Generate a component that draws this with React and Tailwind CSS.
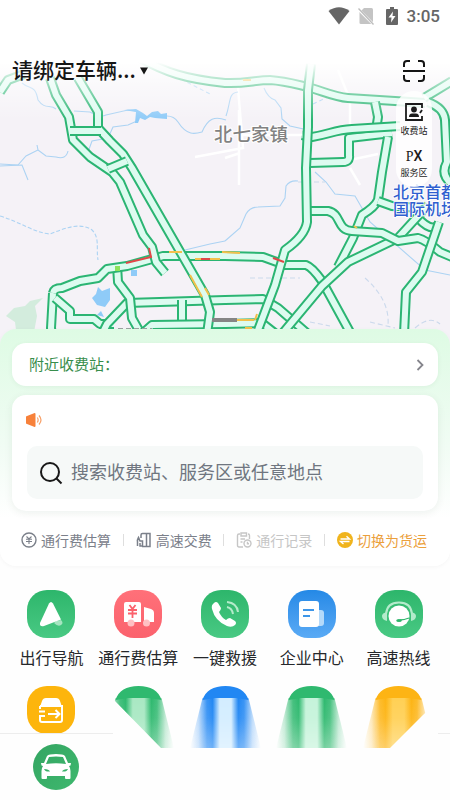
import React from 'react';

// Every road is drawn twice: a green casing, then a pale core on top of it
const roads = [
    'M0 92 L8 80 L24 74',
    'M140 58 C165 72 185 79 225 83 C245 84 255 80 270 80 C285 81 295 84 308 87 C325 92 335 97 348 98 L395 101 L425 103',
    'M424 98 L452 81',
    'M428 102 Q444 108 445 120 L447 162 Q440 175 452 184',
    'M375 102 L378 117 L376 130',
    'M310 163 L343 162 Q350 162 349 155 L349 138 L392 133',
    'M302 135 L312 137 C330 134 335 130 352 129 L400 126',
    'M388 137 L382 172 L378 200 Q375 207 362 215 L353 238 L338 267',
    'M378 201 L392 206 L420 208',
    'M418 218 Q430 231 437 226',
    'M53 340 L51 328 L53 293',
    'M55 298 L70 311 L70 319 L94 319 L100 324 L114 324',
    'M100 338 L107 324 L127 303 L225 300 L263 299 L278 308 L308 334',
    'M117 265 L118 282 L130 298 L132 318 L141 334',
    'M182 300 L182 334',
    'M143 333 L152 325 L225 324 L262 323 L276 334',
    'M53 293 Q54 288 62 288 L80 281 L98 278 L107 269 L127 266 L163 256 L225 256 L263 257 L285 265 L306 265 Q312 267 322 281 L351 334',
    'M282 334 L322 286 L348 262 L398 238 L419 215 L428 205',
    'M307 211 L328 211 C342 214 336 230 352 231 L382 233 L398 241 L418 238 Q426 240 440 252 L452 257',
    'M311 64 L308 90 L308 127 L306 168 L307 222 Q305 236 285 250 L275 285 L258 330',
    'M439 222 L422 272 L406 292 L404 334',
    'M50 78 L56 95 L69 117 L73 140 L90 157 L112 172 L120 182 L143 235 L152 247 L156 262 L165 273',
    'M78 78 L98 112 L98 128 L110 141 L123 154 L132 168 L205 295 L210 312 L207 334',
    'M70 131 L101 131',
    'M108 169 L127 161',
];

const rivers = [
    'M22 83 C30 90 35 84 38 100 C45 110 50 104 56 109',
    'M74 111 L90 112 Q100 118 106 115 L128 110 L138 111 M167 116 Q174 116 178 122 C187 136 195 134 202 132 C208 118 215 116 226 120',
    'M137 121 L128 125 L113 127 L108 138 L92 141 L88 152',
    'M0 164 L18 165 L26 156 L38 150 L37 145 M38 150 L46 156 L56 157 Q66 160 68 151',
    'M226 116 C231 102 228 93 238 92 M264 88 Q268 98 275 100 L281 108 L282 119 L290 126 L308 130',
    'M0 166 L22 165 L28 180',
    'M225 241 L240 228 L246 214 Q250 207 258 207 L280 206 L285 198 L286 186 Q290 180 298 181',
    'M315 172 L326 182 L335 194 L355 196 L370 222 L425 270 L450 275',
];

function Road({ d }) {
    return (
        <>
            <path d={d} stroke="#2bb573" strokeWidth="10" />
            <path d={d} stroke="#ddfbf0" strokeWidth="6" />
        </>
    );
}

function TrafficMap() {
    return (
        <svg
            viewBox="0 0 450 345"
            preserveAspectRatio="xMidYMin slice"
            className="absolute inset-0 h-full w-full"
            role="img"
            aria-label="路况地图"
        >
            <defs>
                <linearGradient id="mapFade" x1="0" y1="0" x2="0" y2="1">
                    <stop offset="0" stopColor="#fff" />
                    <stop offset="0.52" stopColor="#fff" />
                    <stop offset="0.72" stopColor="#fff" stopOpacity="0.5" />
                    <stop offset="1" stopColor="#fff" stopOpacity="0" />
                </linearGradient>
            </defs>
            <rect width="450" height="345" fill="#f5f2f7" />
            <path d="M6 316 L14 308 L25 306 L30 301 L43 298 L35 306 L37 316 L34 332 L16 330 L15 322 Z" fill="#d3ecdd" />

            <g fill="none" stroke="#fff" strokeWidth="2.500">
                <path d="M195 157 L243 148 L238 88 M239 185 L239 110 M225 158 L240 153 M243 135 L305 135" />
                <path d="M338 70 L350 100 L350 125 M350 160 L378 154 M350 168 L360 185" />
            </g>
            <g fill="none" stroke="#acd3f3" strokeWidth="1.100">
                {rivers.map((d) => (
                    <path key={d} d={d} />
                ))}
                <path d="M0 216 C20 222 35 233 50 234 C65 228 80 222 92 230 C100 238 96 248 98 260" strokeDasharray="4 2" />
                <path d="M185 250 L210 244 L225 241" />
                <path d="M298 182 L325 182 M250 278 L300 278 M365 278 Q390 300 388 325 M310 322 L330 326 M370 322 L395 328 M415 328 Q430 315 440 324" stroke="#cbd9ec" strokeDasharray="5 3" />
                <path d="M175 76 L210 94 M313 104 L328 97 L340 98" strokeDasharray="4 3" />
            </g>
            <g fill="#8fcbf8">
                <path d="M124 110 L136 109 L143 113 L147 116 L152 112 L158 111 L161 114 L167 113 L167 119 L155 118 L150 117 L145 120 L140 118 L138 123 L135 123 L136 112 Z" />
                <path d="M98 287 L102 291 L110 288 L110 300 L105 307 L97 305 L92 298 L96 294 Z M97 315 L101 311 L104 317 Z M131 270 h6 v6 h-6 Z" />
            </g>

            <g fill="none" strokeLinejoin="round">
                {roads.map((d) => (
                    <Road key={d} d={d} />
                ))}
            </g>

            {/* Slow and congested stretches */}
            <g fill="none" strokeWidth="2">
                <path d="M126 263 L151 257 L149 248 M201 259 L210 259 M273 258 L284 262" stroke="#e04848" />
                <path d="M169 252 L182 252 M195 259 L201 259 M210 259 L220 259 M222 252 L240 253 M190 275 L202 297 M205 288 L209 295 M234 320 L254 320 M257 314 L255 320 M245 328 L252 328 M354 226 L357 228 M243 80 L251 80" stroke="#f3c04c" />
                <path d="M212 320 L237 320" stroke="#858585" strokeWidth="4" />
                <path d="M118 329 L152 329" stroke="#9aa3a0" strokeDasharray="5 3" />
            </g>
            <path d="M115 266 h5 v5 h-5 Z" fill="#8be25c" />

            <text x="214" y="141" fontSize="18.5" fontWeight="500" fill="#828282" stroke="#fff" strokeWidth="2" paintOrder="stroke">北七家镇</text>
            <g fontSize="16" fontWeight="500" fill="#2f5fd0" stroke="#fff" strokeWidth="1.500" paintOrder="stroke">
                <text x="393" y="198">北京首都</text>
                <text x="393" y="215">国际机场</text>
            </g>
            <rect width="450" height="120" fill="url(#mapFade)" />
        </svg>
    );
}

function StatusBar() {
    return (
        <div className="flex h-8 items-center justify-end pr-[10px] text-[#666666]">
            <svg viewBox="0 0 22 18" className="mr-2 h-[18px] w-[22px]" fill="currentColor">
                <path d="M0.500 4 Q11 -3.500 21.500 4 L11 17.500 Z" />
            </svg>
            <svg viewBox="0 0 17 18" className="mr-[11px] h-[18px] w-[17px]">
                <path d="M6 1 H13.500 Q15 1 15 2.500 V16 Q15 17 13.500 17 H3 Q1.500 17 1.500 16 V5.500 Z" fill="#c4c4c4" />
                <path d="M0 2 L16 18" stroke="#fff" strokeWidth="2.500" />
                <path d="M0.500 1.500 L15.500 17.500" stroke="#bdbdbd" strokeWidth="1.300" />
            </svg>
            <svg viewBox="0 0 12 18" className="mr-[9px] h-[18px] w-3" fill="currentColor">
                <path fillRule="evenodd" d="M4 0 H8 V2 H11 Q12 2 12 3 V17 Q12 18 11 18 H1 Q0 18 0 17 V3 Q0 2 1 2 H4 Z M7 4.500 L2.500 10.500 H5.500 L5 15.500 L9.500 9 H6.500 Z" />
            </svg>
            <span className="font-[Roboto] text-[17px] leading-5 font-medium">3:05</span>
        </div>
    );
}

function MapTools() {
    return (
        <div className="flex h-[96px] w-9 flex-col items-center rounded-[18px] bg-white/85 pt-3">
            <button className="flex flex-col items-center text-[#1b1b1b]">
                <svg viewBox="0 0 18 18" className="h-[18px] w-[18px]" fill="none" stroke="currentColor" strokeWidth="1.800">
                    <path d="M17 5 V1 H1 V17 H17 V13" />
                    <path d="M17 7 L15 10" />
                    <circle cx="9" cy="6.500" r="2.900" fill="currentColor" stroke="none" />
                    <path d="M4 14 Q4 10.500 7 10.500 H11 Q14 10.500 14 14 Z" fill="currentColor" stroke="none" />
                </svg>
                <span className="mt-1 text-[9px] leading-3 whitespace-nowrap">收费站</span>
            </button>
            <button className="mt-2 flex flex-col items-center text-[#1b1b1b]">
                <span className="text-[14px] leading-5">
                    <span className="font-['Liberation_Serif']">P</span>
                    <span className="font-[Roboto] font-medium">X</span>
                </span>
                <span className="text-[9px] leading-3 whitespace-nowrap">服务区</span>
            </button>
        </div>
    );
}

function MapHeader() {
    return (
        <header className="relative h-[345px] overflow-hidden">
            <TrafficMap />
            <div className="relative">
                <StatusBar />
                <div className="mt-[23px] flex items-start justify-between pr-[18px] pl-3">
                    <button className="flex h-8 items-center text-[21px] leading-7 font-medium text-[#161616]">
                        <span className="mb-1">请绑定车辆...</span>
                        <svg viewBox="0 0 8 8" className="ml-1 h-2 w-2" fill="currentColor">
                            <path d="M0 0.500 H8 L4 7.500 Z" />
                        </svg>
                    </button>
                    <div className="flex w-9 flex-col items-center gap-1">
                        <button aria-label="扫一扫" className="flex h-8 items-center">
                            <svg viewBox="0 0 24 24" className="h-6 w-6" fill="none" stroke="#151515" strokeWidth="2">
                                <path d="M2 8 V5 Q2 2 5 2 H8 M16 2 H19 Q22 2 22 5 V8 M22 16 V19 Q22 22 19 22 H16 M8 22 H5 Q2 22 2 19 V16 M1 12 H23" />
                            </svg>
                        </button>
                        <MapTools />
                    </div>
                </div>
            </div>
        </header>
    );
}

const YuanIcon = () => (
    <svg viewBox="0 0 16 16" className="h-4 w-4" fill="none" stroke="currentColor" strokeWidth="1.400">
        <circle cx="8" cy="8" r="7" />
        <path d="M5.500 4.500 L8 7 L10.500 4.500 M5 7.300 H11 M5 9.500 H11 M8 7 V12" strokeWidth="1.100" />
    </svg>
);

const GateIcon = () => (
    <svg viewBox="0 0 16 16" className="h-4 w-4" fill="none" stroke="currentColor" strokeWidth="1.500">
        <path d="M5 6 V3 Q5 1.500 6.500 1.500 H14 V14.500 H6 M10.500 2 V14" />
        <path d="M1.500 14 V10 Q1 8 2.500 5.500 L4 9 H6.500 V14 H4 V11" />
    </svg>
);

const RecordIcon = () => (
    <svg viewBox="0 0 16 16" className="h-4 w-4" fill="none" stroke="currentColor" strokeWidth="1.400">
        <path d="M7 15 H3 Q1.500 15 1.500 13.500 V3.500 Q1.500 2 3 2 H4 M12 2 Q13.500 2 13.500 3.500 V7 M5 1 H10.500 V4 H5 Z M4.500 7 H9 M4.500 10 H6.500" />
        <circle cx="11.500" cy="11.500" r="3.500" />
        <path d="M11.500 9.800 V11.700 H13" />
    </svg>
);

const SwitchIcon = () => (
    <svg viewBox="0 0 16 16" className="h-4 w-4">
        <circle cx="8" cy="8" r="8" fill="#f0b41c" />
        <path d="M3.500 7 H12.500 L9.500 4.300 M12.500 9.500 H3.500 L6.500 12" fill="none" stroke="#fff" strokeWidth="1.400" />
    </svg>
);

const shortcuts = [
    { label: '通行费估算', icon: <YuanIcon />, color: 'text-[#7b808a]' },
    { label: '高速交费', icon: <GateIcon />, color: 'text-[#7b808a]' },
    { label: '通行记录', icon: <RecordIcon />, color: 'text-[#c6c6c6]' },
    { label: '切换为货运', icon: <SwitchIcon />, color: 'text-[#eba03c]' },
];

function SearchPanel() {
    return (
        <section className="relative -mt-4 rounded-2xl bg-linear-to-b from-[#defbe4] via-[#f1fcf4] via-50% to-white to-80% px-3 pt-[14px] shadow-[0_1px_4px_rgba(0,0,0,0.04)]">
            <button className="flex h-[43px] w-full items-center justify-between rounded-[14px] bg-white pr-3 pl-[17px] text-[15px] text-[#388e4c] shadow-[0_1px_5px_rgba(0,80,30,0.06)]">
                附近收费站：
                <svg viewBox="0 0 12 12" className="h-3 w-3" fill="none" stroke="#85858c" strokeWidth="1.800">
                    <path d="M3.500 1 L8.500 6 L3.500 11" />
                </svg>
            </button>

            <div className="mt-[9px] rounded-[14px] bg-white px-[15px] pt-[17px] pb-3 shadow-[0_2px_8px_rgba(0,60,30,0.07)]">
                <svg viewBox="0 0 16 16" className="-ml-px h-4 w-4" aria-label="公告">
                    <path d="M0 5 Q0 4 1 4 L8 1.200 Q9.500 0.800 9.500 2 V14 Q9.500 15.200 8 14.800 L1 12 Q0 12 0 11 Z" fill="#f7813a" />
                    <path d="M11.300 5.500 Q13 8 11.300 10.500 M13 3.500 Q17 8 13 12.500" fill="none" stroke="#f7a068" strokeWidth="1.200" />
                </svg>
                <label className="mt-[18px] flex h-[53px] items-center rounded-[10px] bg-[#f6f9f8] pl-3">
                    <svg viewBox="0 0 24 24" className="h-6 w-6 shrink-0" fill="none" stroke="#181818" strokeWidth="2">
                        <circle cx="11" cy="11" r="9" />
                        <path d="M17.500 17.500 L22.500 22.500" />
                    </svg>
                    <input
                        type="text"
                        aria-label="搜索"
                        placeholder="搜索收费站、服务区或任意地点"
                        className="ml-2 w-full min-w-0 bg-transparent pb-[2px] text-[18px] text-[#444] outline-none placeholder:text-[#6f7680]"
                    />
                </label>
            </div>

            <div className="flex h-[55px] items-center justify-between pt-[2px] pr-[11px] pl-[9px]">
                {shortcuts.map((item, i) => (
                    <React.Fragment key={item.label}>
                        {i > 0 && <span className="h-3 w-px bg-[#dedede]" />}
                        <button className={`flex items-center gap-1 text-[14px] leading-5 whitespace-nowrap ${item.color}`}>
                            {item.icon}
                            {item.label}
                        </button>
                    </React.Fragment>
                ))}
            </div>
        </section>
    );
}

const services = [
    {
        label: '出行导航',
        bg: 'from-[#2db66b] to-[#48c983]',
        art: (
            <>
                <path d="M29 31 L34 30 Q37 33 34 35 Q31 37 27 33 Z" fill="#a5e4c0" />
                <path d="M22 13.500 Q24 10.500 26 13.500 L34 29.500 L17 36 Q12.500 37 13 33 Z" fill="#fff" />
            </>
        ),
    },
    {
        label: '通行费估算',
        bg: 'from-[#ff7079] to-[#fb626d]',
        art: (
            <>
                <path d="M12 12 H25 Q27 12 27 14 V32 H10 V14 Q10 12 12 12 Z M30 17 L37 19 Q40 20 40 23 V32 H30 Z" fill="#fff" />
                <path d="M15.500 15 L18.500 19 L21.500 15 M14 20 H23 M14 23.500 H23 M18.500 19 V28" fill="none" stroke="#fb626d" strokeWidth="1.800" />
                <circle cx="17" cy="33" r="3.500" fill="#ffc0c3" />
                <circle cx="32.500" cy="33" r="3.500" fill="#ffc0c3" />
            </>
        ),
    },
    {
        label: '一键救援',
        bg: 'from-[#2db66b] to-[#48c983]',
        art: (
            <>
                <path d="M13 13 Q15 11 17 13 L20 18 Q20 20 18 22 Q20 27 25 30 Q27 28 29 28 L34 31 Q36 33 34 35 Q31 38 26 36 Q14 31 11 19 Q10 15 13 13 Z" fill="#fff" />
                <path d="M26 17 Q31 18 32 24 M26 12 Q36 13 37 22" fill="none" stroke="#b4ebcb" strokeWidth="2" />
            </>
        ),
    },
    {
        label: '企业中心',
        bg: 'from-[#2489e6] to-[#59aaf5]',
        art: (
            <>
                <path d="M28 20 H33 Q36 20 36 23 V33 Q36 36 33 36 H28 Z" fill="#b5dafa" />
                <rect x="11" y="11" width="20" height="26" rx="3" fill="#fff" />
                <path d="M15 20 H26 M15 26 H22" stroke="#3d96e8" strokeWidth="2" />
            </>
        ),
    },
    {
        label: '高速热线',
        bg: 'from-[#2db66b] to-[#48c983]',
        art: (
            <>
                <path d="M11 24 Q12 12.500 24 12.500 Q36 12.500 37 24" fill="none" stroke="#b4ebcb" strokeWidth="2" />
                <path d="M12 22 V31 Q7 30 7 26 Q7 23 12 22 Z M36 22 V31 Q41 30 41 26 Q41 23 36 22 Z" fill="#b4ebcb" />
                <circle cx="24" cy="26" r="10.500" fill="#fff" />
                <path d="M34 28 Q29 30 25 30" fill="none" stroke="#2db66b" strokeWidth="1.300" />
                <ellipse cx="24" cy="30.500" rx="2.800" ry="1.600" fill="#2db66b" />
            </>
        ),
    },
];

// Tiles that trail off into a beam of light towards the tab bar
const beams = [
    { id: 'green', color: '#2fb96f', core: '#a9e8c3', clip: 'M0 0 H87 V62 H66 L20 15 Z' },
    { id: 'blue', color: '#2187f3', core: '#d3edff', clip: 'M0 0 H87 V62 H0 Z' },
    { id: 'mint', color: '#2fb96f', core: '#c5f3da', clip: 'M0 0 H87 V62 H0 Z' },
    { id: 'amber', color: '#fdb414', core: '#ffd055', clip: 'M0 0 H87 V12 L68 29 L35 62 H0 Z' },
];

function Beam({ id, color, core, clip }) {
    return (
        <svg viewBox="0 0 87 62" className="h-[62px] w-[87px]">
            <defs>
                <clipPath id={`clip-${id}`}>
                    <path d={clip} />
                </clipPath>
                <linearGradient id={`side-${id}`} gradientUnits="userSpaceOnUse" x1="8" y1="0" x2="79" y2="0">
                    <stop offset="0" stopColor={color} stopOpacity="0" />
                    <stop offset="0.12" stopColor={color} stopOpacity="0.3" />
                    <stop offset="0.24" stopColor={color} stopOpacity="0.9" />
                    <stop offset="0.32" stopColor={color} />
                    <stop offset="0.42" stopColor={core} />
                    <stop offset="0.58" stopColor={core} />
                    <stop offset="0.68" stopColor={color} />
                    <stop offset="0.76" stopColor={color} stopOpacity="0.9" />
                    <stop offset="0.88" stopColor={color} stopOpacity="0.3" />
                    <stop offset="1" stopColor={color} stopOpacity="0" />
                </linearGradient>
                <linearGradient id={`fall-${id}`} x1="0" y1="0" x2="0" y2="1">
                    <stop offset="0" stopColor="#fff" />
                    <stop offset="0.4" stopColor="#eee" />
                    <stop offset="1" stopColor="#a8a8a8" />
                </linearGradient>
                <mask id={`mask-${id}`}>
                    <path d="M20.500 12 H66.500 L79 62 H8 Z" fill={`url(#fall-${id})`} />
                </mask>
            </defs>
            <g clipPath={`url(#clip-${id})`}>
                <rect x="8" y="12" width="71" height="50" fill={`url(#side-${id})`} mask={`url(#mask-${id})`} />
                <path d="M20.500 14 Q25 0 43.500 0 Q62 0 66.500 14 L54 12 H33 Z" fill={color} />
            </g>
        </svg>
    );
}

function Services() {
    return (
        <section className="px-2 pt-6">
            <div className="grid grid-cols-5">
                {services.map((item) => (
                    <a key={item.label} href="#" className="flex flex-col items-center text-[#26282b]">
                        <span className={`h-12 w-12 rounded-[20px] bg-linear-to-b ${item.bg}`}>
                            <svg viewBox="0 0 48 48" className="h-12 w-12">
                                {item.art}
                            </svg>
                        </span>
                        <span className="mt-2 text-[16px] leading-[22px] whitespace-nowrap">{item.label}</span>
                    </a>
                ))}
            </div>
            <div className="relative z-10 mt-[18px] grid grid-cols-5 justify-items-center">
                <a href="#" aria-label="更多服务" className="h-[47px] w-12 overflow-hidden">
                    <span className="block h-12 w-12 rounded-[20px] bg-[#fdb50c]">
                        <svg viewBox="0 0 48 48" className="h-12 w-12">
                            <path d="M15 15 Q16 12 19 12 H29 Q32 12 33 15 L35 21 H13 Z" fill="#fff" />
                            <path d="M13 20 H35 V34 Q35 36 33 36 H15 Q13 36 13 34 V31 M13 20 V23" fill="none" stroke="#fff" strokeWidth="2" />
                            <path d="M21 28 H32 M28.500 24 L32.500 28 L28.500 32 M12 25.500 H18 M12 30 H18" fill="none" stroke="#fff" strokeWidth="2" />
                        </svg>
                    </span>
                </a>
                {beams.map((beam) => (
                    <Beam key={beam.id} {...beam} />
                ))}
            </div>
        </section>
    );
}

function TabBar() {
    return (
        <nav className="-mt-[15px] flex h-[67px] justify-between">
            <div className="w-1/4 border-t border-[#ededed] pt-[10px] pl-[33px]">
                <button aria-label="首页" className="block h-[46px] w-[46px] rounded-full bg-linear-to-br from-[#34a562] to-[#3eb86e]">
                    <svg viewBox="0 0 46 46" className="h-[46px] w-[46px]">
                        <path fillRule="evenodd" d="M14 12 Q15 10.500 17 10.500 Q23 9.500 29 10.500 Q31 10.500 32 12 L35 19 L38 19 L37.500 21.500 L36 22 Q37.500 24 37.500 27 V34 Q37.500 35 36.500 35 H33 Q32 35 32 34 V32 H14 V34 Q14 35 13 35 H9.500 Q8.500 35 8.500 34 V27 Q8.500 24 10 22 L8.500 21.500 L8 19 L11 19 Z M16 13 L13 20 Q23 18.500 33 20 L30 13 Q23 12 16 13 Z M11 25 Q12 28 17 27.500 Q16 25 11 25 Z M35 25 Q30 25 29 27.500 Q34 28 35 25 Z" fill="#fff" />
                    </svg>
                </button>
            </div>
            <div className="w-3 border-t border-[#ededed]" />
        </nav>
    );
}

export default function App() {
    return (
        <main className="min-h-screen overflow-hidden bg-[#fefefe] font-['Noto_Sans_CJK_SC',sans-serif]">
            <MapHeader />
            <SearchPanel />
            <Services />
            <TabBar />
        </main>
    );
}
